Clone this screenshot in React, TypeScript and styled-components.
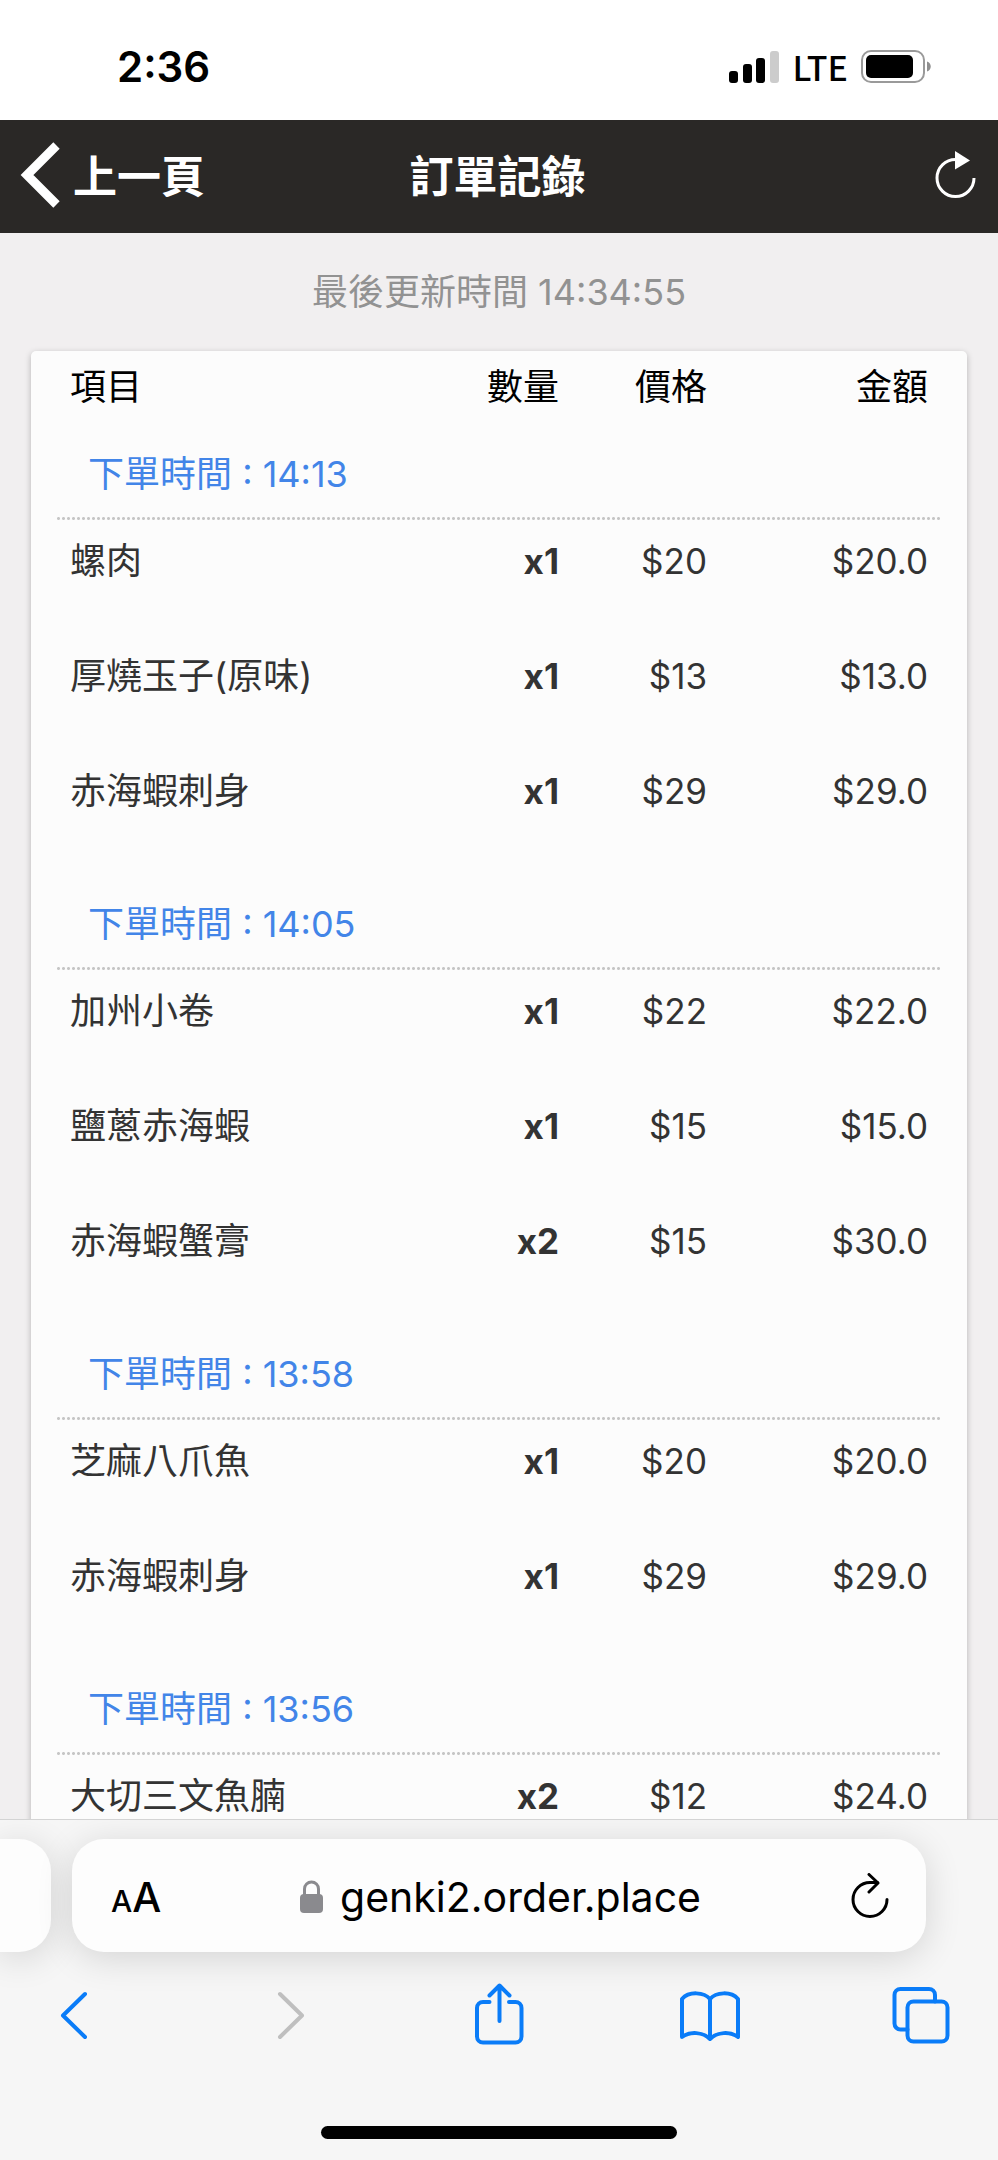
import React from 'react';
import styled, { createGlobalStyle } from 'styled-components';

const GlobalStyle = createGlobalStyle`
  *, *::before, *::after { box-sizing: border-box; }
  body {
    margin: 0;
    background: #f1eff0;
    font-family: Inter, "Noto Sans CJK TC", "Liberation Sans", sans-serif;
    font-size: 36px;
    line-height: 44px;
    color: #333;
  }
  button {
    margin: 0;
    padding: 0;
    border: 0;
    background: none;
    font: inherit;
    color: inherit;
    cursor: pointer;
  }
`;

const Screen = styled.div`
  display: flex;
  flex-direction: column;
  height: 100vh;
  overflow: hidden;
`;

const StatusBar = styled.div`
  flex: none;
  display: flex;
  align-items: center;
  justify-content: space-between;
  height: 120px;
  padding: 14px 66px 0 117px;
  background: #fff;
  color: #000;
`;

const Clock = styled.time`
  font-size: 42px;
  font-weight: 600;
`;

const StatusIcons = styled.div`
  display: flex;
  align-items: center;
  gap: 13px;
`;

const Network = styled.span`
  font-family: "Noto Sans CJK TC", sans-serif;
  font-size: 34px;
  font-weight: 500;
`;

const Icon = styled.svg`
  display: block;
  flex: none;
  fill: none;
  stroke: currentColor;
`;

const NavBar = styled.header`
  flex: none;
  display: grid;
  grid-template-columns: 1fr auto 1fr;
  align-items: center;
  height: 113px;
  padding: 0 21px 0 18px;
  background: #2a2826;
  color: #fff;
  font-size: 44px;
  font-weight: 600;
`;

const BackButton = styled.button`
  display: flex;
  align-items: center;
  gap: 11px;
  justify-self: start;
`;

const PageTitle = styled.h1`
  margin: 0;
  font-size: inherit;
  font-weight: inherit;
`;

const RefreshButton = styled.button`
  justify-self: end;
`;

const Content = styled.main`
  flex: 1;
  min-height: 0;
  overflow-y: auto;
  scrollbar-width: none;
  padding: 0 31px;
`;

const Updated = styled.p`
  margin: 0;
  padding: 37px 0;
  text-align: center;
  color: #929292;
`;

const Card = styled.section`
  padding: 0 25px;
  border-radius: 5px;
  background: #fcfcfc;
  box-shadow: 0 2px 6px rgba(0, 0, 0, 0.25);
`;

const Table = styled.table`
  width: 100%;
  table-layout: fixed;
  border-collapse: separate;
  border-spacing: 0;
`;

const Col = styled.col<{ $w?: number }>`
  width: ${({ $w }) => ($w ? `${$w}px` : 'auto')};
`;

const HeadCell = styled.th<{ $end?: boolean }>`
  padding: 14px 0 6px;
  text-align: ${({ $end }) => ($end ? 'right' : 'left')};
  font-weight: 400;
  color: #000;
  &:first-child { padding-left: 14px; }
  &:last-child { padding-right: 14px; }
`;

const OrderTime = styled.th`
  height: 105px;
  padding: 37px 32px 24px;
  text-align: left;
  font-weight: 400;
  color: #4285e8;
  background: radial-gradient(circle, #c6c6c6 1px, transparent 2px) left bottom / 5px 3px repeat-x;
`;

const Cell = styled.td<{ $end?: boolean; $strong?: boolean }>`
  padding: 19px 0 52px;
  text-align: ${({ $end }) => ($end ? 'right' : 'left')};
  font-size: ${({ $end }) => ($end ? 35 : 36)}px;
  font-weight: ${({ $strong }) => ($strong ? 700 : 400)};
  white-space: nowrap;
  &:first-child { padding-left: 14px; }
  &:last-child { padding-right: 14px; }
`;

const BrowserBar = styled.footer`
  flex: none;
  display: flex;
  flex-direction: column;
  border-top: 1px solid #d4d4d4;
  background: #f6f6f6;
  overflow: hidden;
`;

const TabStrip = styled.div`
  display: flex;
  gap: 21px;
  padding: 19px 72px 23px 0;
`;

const NeighbourTab = styled.div`
  flex: none;
  width: 51px;
  height: 113px;
  border-radius: 0 32px 32px 0;
  background: #fdfdfd;
  box-shadow: 0 6px 36px rgba(0, 0, 0, 0.14);
`;

const AddressBar = styled.div`
  flex: 1;
  display: grid;
  grid-template-columns: 1fr auto 1fr;
  align-items: center;
  height: 113px;
  padding: 2px 36px 0 39px;
  border-radius: 32px;
  background: #fdfdfd;
  box-shadow: 0 6px 36px rgba(0, 0, 0, 0.14);
  color: #000;
`;

const TextSizeButton = styled.button`
  justify-self: start;
  display: flex;
  align-items: baseline;
  padding-top: 4px;
  font-weight: 500;
`;

const Letter = styled.span<{ $size: number }>`
  font-size: ${({ $size }) => $size}px;
`;

const Address = styled.div`
  display: flex;
  align-items: center;
  gap: 16px;
  font-size: 41px;
`;

const ReloadButton = styled.button`
  justify-self: end;
`;

const Toolbar = styled.nav`
  display: flex;
  justify-content: space-between;
  padding: 0 37px 0 33px;
`;

const ToolButton = styled.button`
  color: #0a7cf8;
  &:disabled { color: #bfbfbf; }
`;

const HomeIndicator = styled.div`
  width: 356px;
  height: 13px;
  margin: 71px auto 21px;
  border-radius: 7px;
  background: #000;
`;

type Item = { name: string; qty: number; price: number };
type Order = { time: string; items: Item[] };

const orders: Order[] = [
  {
    time: '14:13',
    items: [
      { name: '螺肉', qty: 1, price: 20 },
      { name: '厚燒玉子(原味)', qty: 1, price: 13 },
      { name: '赤海蝦刺身', qty: 1, price: 29 },
    ],
  },
  {
    time: '14:05',
    items: [
      { name: '加州小卷', qty: 1, price: 22 },
      { name: '鹽蔥赤海蝦', qty: 1, price: 15 },
      { name: '赤海蝦蟹膏', qty: 2, price: 15 },
    ],
  },
  {
    time: '13:58',
    items: [
      { name: '芝麻八爪魚', qty: 1, price: 20 },
      { name: '赤海蝦刺身', qty: 1, price: 29 },
    ],
  },
  { time: '13:56', items: [{ name: '大切三文魚腩', qty: 2, price: 12 }] },
];

const SignalIcon = () => (
  <Icon width="50" height="32" viewBox="0 0 50 32" aria-label="Signal">
    <g fill="#000" stroke="none">
      <rect x="0" y="20" width="9" height="12" rx="3" />
      <rect x="14" y="13" width="9" height="19" rx="3" />
      <rect x="27" y="7" width="9" height="25" rx="3" />
      <rect x="41" y="0" width="9" height="32" rx="3" fill="#ccc" />
    </g>
  </Icon>
);

const BatteryIcon = () => (
  <Icon width="71" height="34" viewBox="0 0 71 34" aria-label="Battery">
    <rect x="1" y="1" width="62" height="31" rx="9" stroke="#9a9a9a" strokeWidth="2" />
    <rect x="5" y="5" width="47" height="23" rx="5" fill="#000" stroke="none" />
    <path d="M66 11.500c5 1.500 5 8.500 0 10z" fill="#8f8f8f" stroke="none" />
  </Icon>
);

const ToolIcon = ({ children }: { children: React.ReactNode }) => (
  <Icon width="84" height="80" viewBox="0 0 84 80" strokeWidth="4" strokeLinecap="round" strokeLinejoin="round">
    {children}
  </Icon>
);

export default function App() {
  return (
    <>
      <GlobalStyle />
      <Screen>
        <StatusBar>
          <Clock>2:36</Clock>
          <StatusIcons>
            <SignalIcon />
            <Network>LTE</Network>
            <BatteryIcon />
          </StatusIcons>
        </StatusBar>

        <NavBar>
          <BackButton>
            <Icon width="44" height="70" viewBox="0 0 44 70" strokeWidth="9">
              <path d="M38.500 3.500 9 33 38.500 62.500" />
            </Icon>
            上一頁
          </BackButton>
          <PageTitle>訂單記錄</PageTitle>
          <RefreshButton aria-label="Refresh">
            <Icon width="44" height="52" viewBox="0 1 44 52" strokeWidth="3">
              <path d="M22.500 9.500A18.500 18.500 0 1 0 41 28" />
              <path d="M22 1 37 10.500 22 19.500z" fill="currentColor" stroke="none" />
            </Icon>
          </RefreshButton>
        </NavBar>

        <Content>
          <Updated>最後更新時間 14:34:55</Updated>
          <Card>
            <Table>
              <colgroup>
                <Col />
                <Col $w={120} />
                <Col $w={148} />
                <Col $w={235} />
              </colgroup>
              <thead>
                <tr>
                  <HeadCell scope="col">項目</HeadCell>
                  <HeadCell scope="col" $end>數量</HeadCell>
                  <HeadCell scope="col" $end>價格</HeadCell>
                  <HeadCell scope="col" $end>金額</HeadCell>
                </tr>
              </thead>
              {orders.map((order) => (
                <tbody key={order.time}>
                  <tr>
                    <OrderTime colSpan={4} scope="rowgroup">下單時間 : {order.time}</OrderTime>
                  </tr>
                  {order.items.map((item) => (
                    <tr key={item.name}>
                      <Cell>{item.name}</Cell>
                      <Cell $end $strong>x{item.qty}</Cell>
                      <Cell $end>${item.price}</Cell>
                      <Cell $end>${(item.qty * item.price).toFixed(1)}</Cell>
                    </tr>
                  ))}
                </tbody>
              ))}
            </Table>
          </Card>
        </Content>

        <BrowserBar>
          <TabStrip>
            <NeighbourTab />
            <AddressBar>
              <TextSizeButton aria-label="Text size">
                <Letter $size={30}>A</Letter>
                <Letter $size={41}>A</Letter>
              </TextSizeButton>
              <Address>
                <Icon width="24" height="34" viewBox="0 0 24 34" strokeWidth="3">
                  <g color="#8a8a8e">
                    <rect x="0" y="14" width="23" height="19" rx="4" fill="currentColor" stroke="none" />
                    <path d="M4.500 15V9a7 7 0 0 1 14 0v6" stroke="currentColor" />
                  </g>
                </Icon>
                <span>genki2.order.place</span>
              </Address>
              <ReloadButton aria-label="Reload">
                <Icon width="40" height="48" viewBox="0 2 40 48" strokeWidth="3" strokeLinecap="round" strokeLinejoin="round">
                  <path d="M27.500 11.500H20A17 17 0 1 0 37 28.500" />
                  <path d="m19 3.500 9 8.500-9 9" />
                </Icon>
              </ReloadButton>
            </AddressBar>
          </TabStrip>
          <Toolbar>
            <ToolButton aria-label="Back">
              <ToolIcon>
                <path d="M52 19 30 40.500 52 62" />
              </ToolIcon>
            </ToolButton>
            <ToolButton aria-label="Forward" disabled>
              <ToolIcon>
                <path d="m36 19 22 21.500L36 62" />
              </ToolIcon>
            </ToolButton>
            <ToolButton aria-label="Share">
              <ToolIcon>
                <path d="M34.500 27h-6.500a6 6 0 0 0-6 6V61.500a6 6 0 0 0 6 6h32.500a6 6 0 0 0 6-6V33a6 6 0 0 0-6-6h-6.500" />
                <path d="M44.500 46V11M34.500 20.500l10-10 10 10" />
              </ToolIcon>
            </ToolButton>
            <ToolButton aria-label="Bookmarks">
              <ToolIcon>
                <path d="M44 24v40M44 24c-6-7-21-8-28 0v38c8-6 21-5 28 2 7-7 20-8 28-2V24c-7-8-22-7-28 0z" />
              </ToolIcon>
            </ToolButton>
            <ToolButton aria-label="Tabs">
              <ToolIcon>
                <rect x="30.500" y="26.500" width="40" height="40" rx="6" />
                <path d="M30.500 54.500h-7a6 6 0 0 1-6-6V20a6 6 0 0 1 6-6h28.500a6 6 0 0 1 6 6v6.500" />
              </ToolIcon>
            </ToolButton>
          </Toolbar>
          <HomeIndicator />
        </BrowserBar>
      </Screen>
    </>
  );
}
